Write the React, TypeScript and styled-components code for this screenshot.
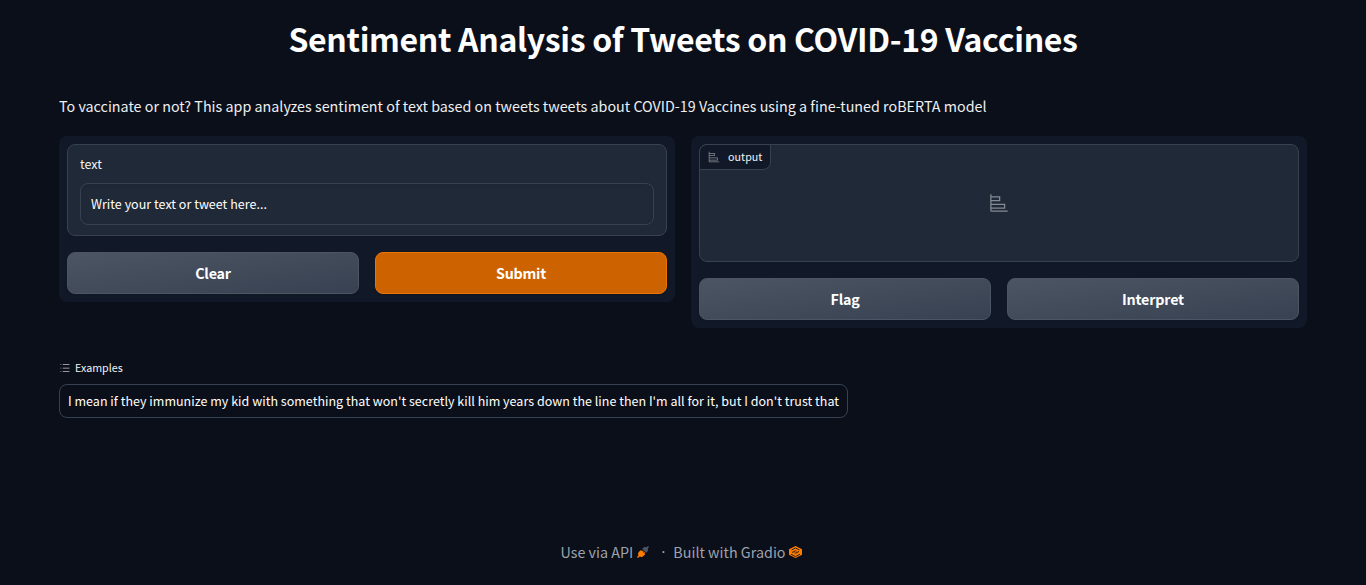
import React from 'react';
import styled, { createGlobalStyle } from 'styled-components';

const GlobalStyle = createGlobalStyle`
  *, *::before, *::after { box-sizing: border-box; }
  body {
    margin: 0;
    background: #0b0f19;
    color: #f3f4f6;
    font-family: "Source Sans Pro", "Noto Sans CJK SC", sans-serif;
  }
`;

const Page = styled.div`
  display: flex;
  flex-direction: column;
  height: 585px;
  padding: 14px 59px 0;
  overflow: hidden;
`;

const Label = styled.span<{ $size: number; $spacing?: number }>`
  font-size: ${(p) => p.$size}px;
  letter-spacing: ${(p) => p.$spacing ?? 0}px;
  white-space: nowrap;
`;

const Title = styled.h1`
  margin: 0;
  height: 48px;
  line-height: 48px;
  text-align: center;
  color: #fff;
  font-size: 32px;
  font-weight: 600;
  letter-spacing: -0.33px;
  white-space: nowrap;
`;

const Description = styled.p`
  margin: 32px 0 0;
  height: 24px;
  line-height: 24px;
  color: #eef0f2;
  font-size: 14.3px;
  letter-spacing: 0.012px;
  white-space: nowrap;
`;

const Columns = styled.main`
  display: grid;
  grid-template-columns: 1fr 1fr;
  align-items: start;
  gap: 16px;
  margin-top: 18px;
`;

const Panel = styled.section`
  display: flex;
  flex-direction: column;
  gap: 16px;
  padding: 8px;
  border-radius: 8px;
  background: #111827;
`;

const Block = styled.div`
  border: 1px solid #374151;
  border-radius: 8px;
  background: #1f2937;
`;

const InputBlock = styled(Block)`
  height: 92px;
  padding: 10px 12px;
`;

const FieldName = styled.div`
  height: 20px;
  margin-bottom: 8px;
  line-height: 14px;
`;

const Field = styled.div`
  height: 42px;
  padding: 0 10px;
  border: 1px solid #374151;
  border-radius: 8px;
  color: #fff;
  line-height: 37px;
  box-shadow: inset 0 2px 4px rgba(0, 0, 0, 0.05);
`;

const OutputBlock = styled(Block)`
  position: relative;
  display: flex;
  align-items: center;
  justify-content: center;
  height: 118px;
  color: #868b93;
`;

const OutputTag = styled.div`
  position: absolute;
  top: -1px;
  left: -1px;
  display: flex;
  align-items: center;
  gap: 8px;
  width: 72px;
  height: 26px;
  padding-left: 8px;
  border: 1px solid #374151;
  border-radius: 8px 0 8px 0;
  background: #111827;
  color: #f3f4f6;
  line-height: 24px;

  svg { color: #868b93; }
`;

const Actions = styled.div`
  display: grid;
  grid-template-columns: 1fr 1fr;
  gap: 16px;
`;

const Button = styled.button<{ $primary?: boolean }>`
  height: 42px;
  padding: 0;
  border: 1px solid ${(p) => (p.$primary ? '#ee7400' : '#4b5563')};
  border-radius: 8px;
  background: ${(p) => (p.$primary ? '#cc6300' : 'linear-gradient(to bottom right, #4b5563, #374151)')};
  box-shadow: 0 1px 2px rgba(0, 0, 0, 0.05);
  color: #fff;
  font-family: inherit;
  font-size: 14.3px;
  font-weight: 600;
  letter-spacing: -0.2px;
  line-height: 40px;
`;

const ExamplesHeading = styled.div`
  display: flex;
  align-items: center;
  gap: 4px;
  height: 20px;
  margin-top: 30px;
  line-height: 20px;

  svg { color: #c4c6ca; }
`;

const Example = styled.div`
  align-self: flex-start;
  width: 789px;
  height: 34px;
  margin-top: 6px;
  padding: 0 8px;
  border: 1px solid #374151;
  border-radius: 8px;
  color: #fff;
  line-height: 29px;
`;

const Footer = styled.footer`
  display: flex;
  justify-content: center;
  align-items: center;
  height: 24px;
  margin: auto 4px 21px 0;
  color: #9ca3af;
  line-height: 24px;
`;

const FooterLink = styled.span<{ $gap: number }>`
  display: flex;
  align-items: center;
  gap: ${(p) => p.$gap}px;
`;

const Dot = styled.span`
  width: 24px;
  padding-left: 12px;
  font-family: "Open Sans", sans-serif;
  font-size: 16px;
`;

const ChartIcon = ({ size }: { size: number }) => (
  <svg width={size} height={size} viewBox="0 0 32 32" fill="currentColor">
    <path d="M4 2H2v26a2 2 0 0 0 2 2h26v-2H4v-3h22v-8H4v-4h14V5H4Zm20 17v4H4v-4ZM16 7v4H4V7Z" />
  </svg>
);

const ListIcon = () => (
  <svg width="12" height="12" viewBox="0 0 32 32" fill="currentColor">
    <path d="M10 6h18v2H10zm0 18h18v2H10zm0-9h18v2H10zm-6 0h2v2H4zm0-9h2v2H4zm0 18h2v2H4z" />
  </svg>
);

const PlugIcon = () => (
  <svg width="12" height="12" viewBox="0 0 24 24">
    <path fill="#4b5563" d="m22 0 2 2-2.500 3c1 3 .5 5-1.500 7l-2 1.500L10.500 6 12 4c2-2 4-2.500 7-1.500Z" />
    <path fill="#ff7c00" d="m8 8 2.500 2.500L12 9l1.500 1.500L12 12l1.500 1.500L15 12l1.500 1.500L15 15l1.500 1.500-3 3c-2.500 2.500-5 3-8 1.500L2 24l-2-2 3-3c-1.500-3-1-5.500 1.500-8Z" />
  </svg>
);

const GradioIcon = () => (
  <svg width="13" height="12" viewBox="0 0 26 24">
    <path fill="#ff7c00" d="M13 0 0 6.500v11L13 24l13-6.500v-11Z" />
    <g fill="none" stroke="#0b0f19" strokeWidth="1.700">
      <path d="m5 8 8-4 8 4" />
      <path d="m6 13 7-3.500 2 1M20 11l-7 3.500-2-1" />
      <path d="m4 16.500 9 4.500 9-4.500" />
    </g>
  </svg>
);

export default function App() {
  return (
    <Page>
      <GlobalStyle />
      <Title>Sentiment Analysis of Tweets on COVID-19 Vaccines</Title>
      <Description>
        To vaccinate or not? This app analyzes sentiment of text based on tweets tweets about COVID-19 Vaccines using a fine-tuned roBERTA model
      </Description>
      <Columns>
        <Panel>
          <InputBlock>
            <FieldName><Label $size={12.5}>text</Label></FieldName>
            <Field><Label $size={12.5} $spacing={0.02}>Write your text or tweet here...</Label></Field>
          </InputBlock>
          <Actions>
            <Button>Clear</Button>
            <Button $primary>Submit</Button>
          </Actions>
        </Panel>
        <Panel>
          <OutputBlock>
            <OutputTag>
              <ChartIcon size={12} />
              <Label $size={10.7} $spacing={0.05}>output</Label>
            </OutputTag>
            <ChartIcon size={20} />
          </OutputBlock>
          <Actions>
            <Button>Flag</Button>
            <Button>Interpret</Button>
          </Actions>
        </Panel>
      </Columns>
      <ExamplesHeading>
        <ListIcon />
        <Label $size={10.7}>Examples</Label>
      </ExamplesHeading>
      <Example>
        <Label $size={12.5} $spacing={0.016}>I mean if they immunize my kid with something that won't secretly kill him years down the line then I'm all for it, but I don't trust that</Label>
      </Example>
      <Footer>
        <FooterLink $gap={4}><Label $size={14.3} $spacing={0.02}>Use via API</Label><PlugIcon /></FooterLink>
        <Dot>·</Dot>
        <FooterLink $gap={3}><Label $size={14.3} $spacing={0.02}>Built with Gradio</Label><GradioIcon /></FooterLink>
      </Footer>
    </Page>
  );
}
